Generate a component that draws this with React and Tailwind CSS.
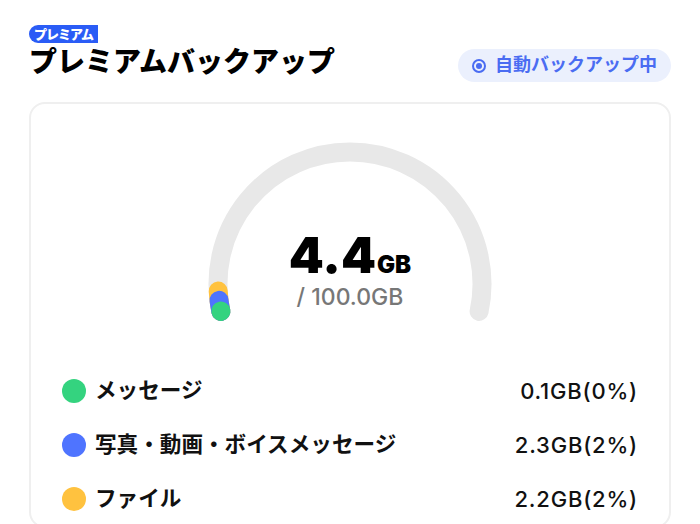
import React from "react";

const usage = [
	{ label: "メッセージ", value: "0.1GB(0%)", color: "bg-[#34d37f]" },
	{ label: "写真・動画・ボイスメッセージ", value: "2.3GB(2%)", color: "bg-[#4f74ff]" },
	{ label: "ファイル", value: "2.2GB(2%)", color: "bg-[#ffc23f]" },
];

// arc: center (150,142), r 132, from 168deg over the top to 372deg
const ARC = "M 20.9 169.4 A 132 132 0 1 1 279.1 169.4";

const Gauge = () => (
	<div className="relative flex justify-center">
		<svg width="300" height="192" viewBox="0 0 300 192">
			<path d={ARC} fill="none" stroke="#e8e8e8" strokeWidth="19" strokeLinecap="round" />
			{/* stacked segments, drawn back to front */}
			<path d={ARC} pathLength="100" fill="none" stroke="#ffc23f" strokeWidth="19" strokeLinecap="round" strokeDasharray="4.4 200" />
			<path d={ARC} pathLength="100" fill="none" stroke="#4f74ff" strokeWidth="19" strokeLinecap="round" strokeDasharray="2.4 200" />
			<path d={ARC} pathLength="100" fill="none" stroke="#34d37f" strokeWidth="19" strokeLinecap="round" strokeDasharray="0.1 200" />
		</svg>
		<div className="absolute inset-x-0 top-[88px] flex flex-col items-center font-['Inter',sans-serif]">
			<div className="flex items-baseline leading-none text-black font-black">
				<span className="text-[50px]">4.4</span>
				<span className="text-[24px] ml-[1px]">GB</span>
			</div>
			<div className="mt-[6px] text-[23px] leading-none font-medium text-[#777]">
				/ 100.0GB
			</div>
		</div>
	</div>
);

export default function App() {
	return (
		<div className="min-h-[524px] bg-white px-[29px] pt-[25px] overflow-hidden font-['Liberation_Sans','Noto_Sans_CJK_JP',sans-serif]">
			<div className="flex items-end justify-between">
				<div>
					<div className="flex w-fit h-[18px] items-center rounded-l-full rounded-tr-[10px] rounded-br-[3px] bg-[#2a5cf6] px-[5px] text-[13px] leading-none font-black tracking-[-1px] text-white">
						プレミアム
					</div>
					<h1 className="mt-[3px] text-[28px] leading-[34px] font-black text-black">
						プレミアムバックアップ
					</h1>
				</div>
				<div className="mb-[-2px] flex h-[33px] items-center gap-[9px] rounded-full bg-[#ebf0fd] px-[14px] text-[18px] font-bold text-[#4a6cf2]">
					<span className="flex h-[14px] w-[14px] items-center justify-center rounded-full border-2 border-[#4a6cf2]">
						<span className="h-[6px] w-[6px] rounded-full bg-[#4a6cf2]" />
					</span>
					自動バックアップ中
				</div>
			</div>

			<div className="mt-[22px] w-[642px] rounded-[16px] border-2 border-[#efefef] pt-[38px]">
				<Gauge />
				<div className="mt-[30px] pl-[31px] pr-[31px]">
					{usage.map((u) => (
						<div key={u.label} className="flex h-[54px] items-center justify-between">
							<div className="flex items-center gap-[9px]">
								<span className={`h-[24px] w-[24px] rounded-full ${u.color}`} />
								<span className="text-[21.6px] font-semibold text-[#111]">{u.label}</span>
							</div>
							<span className="font-['Inter',sans-serif] text-[22px] tracking-[0.8px] font-medium text-[#111]">{u.value}</span>
						</div>
					))}
				</div>
			</div>
		</div>
	);
}
